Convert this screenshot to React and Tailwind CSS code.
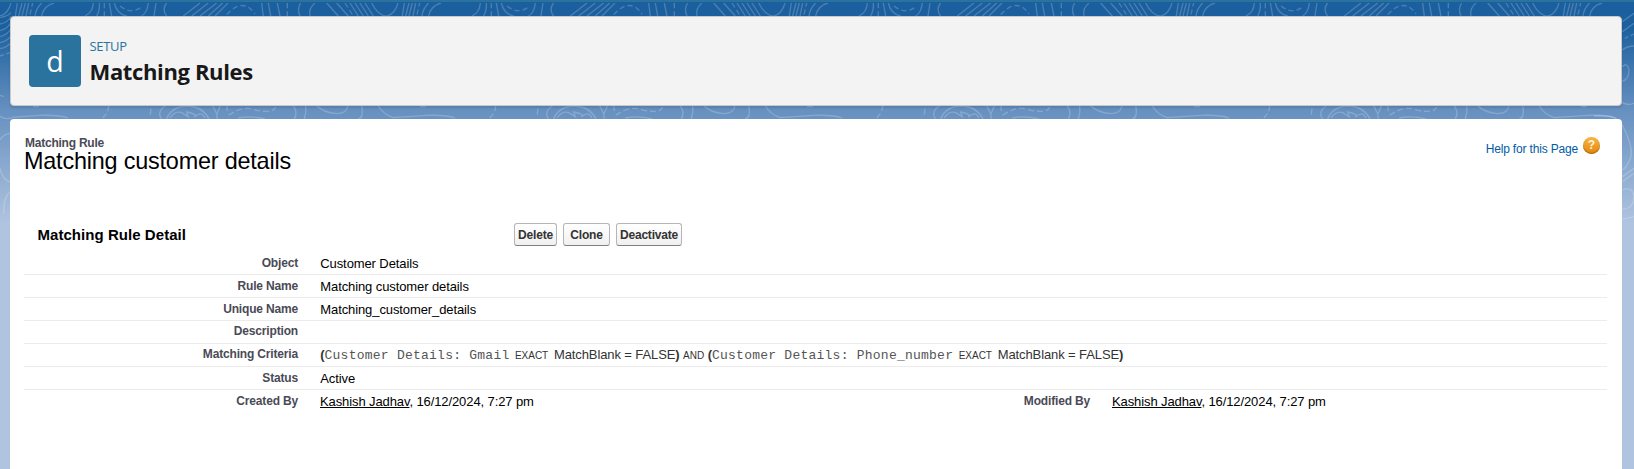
const rows = [
  { label: 'Object', value: 'Customer Details', pad: 'pt-[4px]' },
  { label: 'Rule Name', value: 'Matching customer details', pad: 'pt-[4px]' },
  { label: 'Unique Name', value: 'Matching_customer_details', pad: 'pt-[4px]' },
  { label: 'Description', value: '', pad: 'pt-[3px]' },
  { label: 'Matching Criteria', value: <Criteria />, pad: 'pt-[3px]' },
  { label: 'Status', value: 'Active', pad: 'pt-[4px]' },
];

// Contour lines behind the panels; the two horizontal bands repeat every 387px.
function Contours() {
  return (
    <svg className="pointer-events-none absolute inset-0" width="1634" height="469" fill="none" stroke="#fff" strokeOpacity="0.2">
      <defs>
        <pattern id="band-top" width="387" height="18" patternUnits="userSpaceOnUse">
          <g transform="scale(0.3333)" strokeWidth="4">
            <path d="M0 48Q24 42 33 9M46 48 52 9M56 48 66 9M66 48 76 9M78 48 86 9M105 48Q108 25 125 9M125 48Q130 18 162 9" />
            <path d="M255 48Q278 38 280 9M290 48Q300 30 298 9M328 9 335 48M343 9Q350 42 380 48M445 9Q442 38 425 48M468 9 462 48M500 9Q484 28 500 48" />
            <path d="M550 48 600 9M575 48 625 9M600 48 650 9M625 48 668 9M645 48 684 9" />
            <path d="M785 9 790 48M805 9 812 48M832 9 840 48M902 9Q890 28 900 48M945 9Q925 25 930 48" />
            <path d="M980 9 1015 48M1010 9 1045 48M1050 9 1075 48M1065 9 1090 48M1080 9 1105 48M1095 9 1120 48M1115 9Q1135 48 1160 48" />
            <path strokeDasharray="16 9" d="M90 44 98 9M313 9V48M360 18Q395 46 428 18M680 44Q730 -10 765 42M862 9V48M1035 9 1060 48" />
          </g>
        </pattern>
        <pattern id="band-mid" x="110" y="102" width="387" height="18" patternUnits="userSpaceOnUse">
          <g transform="scale(0.3333)" strokeWidth="4">
            <path d="M155 51Q138 28 170 9M170 51Q185 12 235 12Q280 15 297 51M180 48Q195 25 215 32L235 44 230 30Q262 35 253 45Q275 25 285 48M307 9 320 35 322 51M332 9 320 38" />
            <path d="M385 48Q420 40 465 51M548 9Q565 30 553 51M587 9Q590 30 583 51M618 9Q640 32 680 35Q712 35 714 9M755 9Q762 48 745 51" />
            <path d="M803 9Q820 38 850 47Q880 45 950 40Q1010 38 1035 48" />
            <path strokeDasharray="18 9" d="M123 20 120 45M350 9 353 35M356 40Q400 8 440 25Q490 35 497 15M930 14H952M1157 9Q1158 30 1140 47" />
          </g>
        </pattern>
      </defs>
      <rect x="0" y="3" width="1622" height="13" fill="url(#band-top)" stroke="none" />
      <rect x="12" y="106" width="1608" height="13" fill="url(#band-mid)" stroke="none" />
      <g transform="translate(0 10) scale(0.3333)" strokeWidth="4">
        <path d="M0 22Q24 20 32 8M0 42Q24 38 34 18M0 62Q26 56 34 34M0 80Q24 74 34 54M0 98Q22 94 34 76M0 116Q20 112 34 98" />
        <path d="M0 318Q10 330 36 324M30 370Q8 374 0 390M0 475Q8 510 30 516M12 612Q8 565 30 545" />
        <path strokeDasharray="12 8" d="M0 138 30 128M0 256 18 262" />
      </g>
      <g transform="translate(1594 10) scale(0.3333)" strokeWidth="4">
        <path d="M85 35 120 10M85 65 120 40M85 120Q100 108 120 108M85 170Q100 155 105 180Q105 210 85 213M85 278Q105 288 120 280" />
        <path d="M0 318Q76 312 88 352Q125 425 105 455Q95 475 85 480M85 500 120 475M85 515 120 490M85 540Q110 530 118 550Q125 595 85 598M85 628Q100 625 120 620" />
        <path strokeDasharray="12 8" d="M92 85 120 72" />
      </g>
    </svg>
  );
}

function Mono({ children }) {
  return <span className="font-['Liberation_Mono',monospace] text-[13px] tracking-[0.24px] text-[#555]">{children}</span>;
}

function Small({ children }) {
  return <span className="text-[10px] tracking-normal">{children}</span>;
}

function Criterion({ field }) {
  return (
    <>
      <b>(</b>
      <Mono>{field}</Mono>
      <span className="mr-[2.2px] ml-[1.9px]"> <Small>EXACT</Small></span> MatchBlank = FALSE<b>)</b>
    </>
  );
}

function Criteria() {
  return (
    <span className="whitespace-pre text-[#333]">
      <Criterion field="Customer Details: Gmail" /> <Small>AND</Small>{' '}
      <Criterion field="Customer Details: Phone_number" />
    </span>
  );
}

function Label({ children }) {
  return (
    <div className="w-[274px] shrink-0 text-right text-[12px] leading-[14px] font-bold tracking-[-0.17px] text-[#4a4a56]">
      {children}
    </div>
  );
}

function Stamp() {
  return (
    <div className="ml-[22px] w-[496px] shrink-0 text-[13px] leading-[16px] tracking-[-0.1px] text-black">
      <span className="underline">Kashish Jadhav</span>, 16/12/2024, 7:27 pm
    </div>
  );
}

function Button({ className, children }) {
  return (
    <button
      className={`h-[23px] rounded-[3px] border border-[#b5b5b5] border-b-[#7f7f7f] bg-linear-to-b from-white to-[#f0f0f0] text-center text-[12px] leading-[20px] font-bold tracking-[-0.2px] text-[#333] ${className}`}
    >
      {children}
    </button>
  );
}

export default function App() {
  return (
    <div className="relative h-[469px] overflow-hidden border-t-2 border-[#2a739e] bg-[linear-gradient(to_bottom,#1b5f9e_25px,#6690c0_108px,#b0c4df_222px)] pt-[14px] pr-[12px] pl-[10px] font-['Liberation_Sans',sans-serif]">
      <div className="absolute inset-x-0 -top-[2px] h-[469px] [clip-path:inset(2px_0_0_0)]">
        <Contours />
      </div>
      <header className="relative flex h-[90px] rounded-[4px] border border-[#c9c9c9] bg-[#f3f3f3] pt-[18px] pl-[18px] font-['Open_Sans',sans-serif] shadow-[0_2px_2px_rgba(0,0,0,0.1)]">
        <div className="flex size-[52px] items-center justify-center rounded-[4px] bg-[#2a739e] text-[28.5px] text-white">d</div>
        <div className="ml-[8.5px]">
          <div className="text-[13px] leading-[22px] tracking-[-0.3px] text-[#2a739e]">SETUP</div>
          <h1 className="-mt-px text-[22px] leading-[30px] font-bold tracking-[-0.36px] text-[#181818]">Matching Rules</h1>
        </div>
      </header>
      <main className="relative mt-[13px] h-[360px] rounded-t-[4px] bg-white pt-[16px] pr-[15px] pl-[14px]">
        <div className="flex h-[88px] justify-between">
          <div className="pt-px">
            <div className="pl-px text-[12px] leading-[15px] font-bold tracking-[-0.23px] text-[#4a4a56]">Matching Rule</div>
            <h2 className="-mt-px text-[23.4px] leading-[23px] tracking-[-0.19px] text-black">Matching customer details</h2>
          </div>
          <div className="flex gap-[5px] pr-[7px] text-[12px] leading-[18px] tracking-[-0.17px] text-[#015ba7]">
            <span className="pt-[5px]">Help for this Page</span>
            <span className="mt-[2px] size-[17px] rounded-full bg-linear-to-b from-[#f6b544] to-[#e48600] text-center text-[12px] leading-[17px] font-bold tracking-normal text-[#fff3d6] shadow-[inset_0_-1px_1px_#a86a10]">
              ?
            </span>
          </div>
        </div>
        <div className="flex h-[23px]">
          <h3 className="w-[490px] pl-[13.5px] text-[15px] leading-[23px] font-bold tracking-[0.05px] text-black">Matching Rule Detail</h3>
          <div className="flex gap-[6px]">
            <Button className="w-[43px]">Delete</Button>
            <Button className="w-[47px]">Clone</Button>
            <Button className="w-[66px]">Deactivate</Button>
          </div>
        </div>
        <div className="pt-[6px]">
          {rows.map(({ label, value, pad }) => (
            <div key={label} className={`flex h-[23px] border-b border-[#ececec] ${pad}`}>
              <Label>{label}</Label>
              <div className="ml-[22.3px] text-[13px] leading-[16px] tracking-[-0.1px] text-black">{value}</div>
            </div>
          ))}
          <div className="flex pt-[4px]">
            <Label>Created By</Label>
            <Stamp />
            <Label>Modified By</Label>
            <Stamp />
          </div>
        </div>
      </main>
    </div>
  );
}
